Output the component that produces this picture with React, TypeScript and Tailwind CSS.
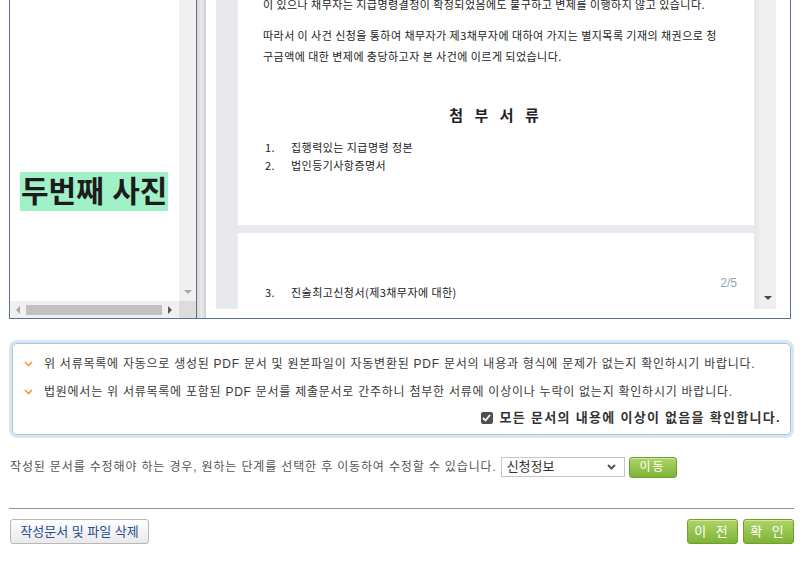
const KR = "font-['Liberation_Sans','Noto_Sans_CJK_KR',sans-serif]";

function Tri({ dir, color }: { dir: "down" | "left" | "right"; color: string }) {
  const pts =
    dir === "down" ? "0,0 8,0 4,4" : dir === "left" ? "4,0 4,8 0,4" : "0,0 0,8 4,4";
  const w = dir === "down" ? 8 : 4;
  const h = dir === "down" ? 4 : 8;
  return (
    <svg width={w} height={h} viewBox={`0 0 ${w} ${h}`}>
      <polygon points={pts} fill={color} />
    </svg>
  );
}

function Chevron() {
  return (
    <svg width="9" height="6" viewBox="0 0 9 6" className="shrink-0">
      <polyline points="1,1 4.5,4.5 8,1" fill="none" stroke="#f29a2e" strokeWidth="1.6" />
    </svg>
  );
}

function GreenButton({ label, className }: { label: string; className: string }) {
  return (
    <div
      className={`flex items-center justify-center rounded-[3px] border border-[#6f9f2c] bg-gradient-to-b from-[#acd565] to-[#7fb336] text-white shadow-[inset_0_1px_0_rgba(255,255,255,0.45)] ${className}`}
    >
      {label}
    </div>
  );
}

export default function App() {
  return (
    <div className={`w-[809px] h-[583px] bg-white overflow-hidden ${KR}`}>
      {/* document frame */}
      <div className="ml-[9px] w-[782px] h-[319px] border-x border-b border-[#5b7190] flex">
        {/* left preview panel */}
        <div className="w-[187px] border-r border-[#5b7190] flex flex-col">
          <div className="flex h-[301px]">
            <div className="w-[169px] bg-white pt-[172px] pl-[10px]">
              <span className="inline-block bg-[#a0f0c8] px-[1px] text-[30px] leading-[39px] font-bold text-[#1c1c1c]">
                두번째 사진
              </span>
            </div>
            <div className="w-[17px] bg-[#f0f0f0] flex flex-col justify-end items-center pb-[7px]">
              <Tri dir="down" color="#a6a6a6" />
            </div>
          </div>
          <div className="flex h-[17px]">
            <div className="w-[169px] bg-[#f0f0f0] flex items-center pl-[6px] pr-[7px] gap-[6px]">
              <Tri dir="left" color="#a8a8a8" />
              <div className="flex-1 h-[10px] bg-[#c1c1c1]" />
              <Tri dir="right" color="#5a5a5a" />
            </div>
            <div className="w-[17px] bg-[#dcdcdc]" />
          </div>
        </div>

        {/* splitter */}
        <div className="w-[9px] bg-gradient-to-r from-[#d6d6d6] via-[#ebebeb] to-[#cfcfcf]" />

        {/* viewer */}
        <div className="flex-1 bg-white pl-[10px] pr-[14px] pb-[9px]">
          <div className="h-full flex bg-[#e8e9ec] overflow-hidden">
            <div className="w-[543px] pl-[22px] pr-[5px] flex flex-col gap-[8px] text-[11px] tracking-[0.45px] text-[#222] font-['Noto_Sans_CJK_KR',sans-serif]">
              <div className="h-[225px] shrink-0 bg-white pl-[25px] overflow-hidden">
                <p className="-mt-[6px] leading-[21px]">
                  이 있으나 채무자는 지급명령결정이 확정되었음에도 불구하고 변제를 이행하지 않고 있습니다.
                </p>
                <p className="mt-[10px] leading-[21px]">
                  따라서 이 사건 신청을 통하여 채무자가 제3채무자에 대하여 가지는 별지목록 기재의 채권으로 청
                  <br />
                  구금액에 대한 변제에 충당하고자 본 사건에 이르게 되었습니다.
                </p>
                <p className="mt-[37px] pr-[25px] text-center text-[15px] leading-[21px] font-bold tracking-[4px]">
                  첨 부 서 류
                </p>
                <ol className="mt-[13px] leading-[18px]">
                  <li className="flex">
                    <span className="w-[28px] pl-[2px]">1.</span>집행력있는 지급명령 정본
                  </li>
                  <li className="flex">
                    <span className="w-[28px] pl-[2px]">2.</span>법인등기사항증명서
                  </li>
                </ol>
              </div>
              <div className="relative h-[120px] shrink-0 bg-white pl-[25px] pt-[50px]">
                <span className="absolute right-[17px] top-[41px] text-[12px] tracking-normal text-[#93a7bd] font-['Liberation_Sans',sans-serif]">
                  2/5
                </span>
                <div className="flex leading-[18px]">
                  <span className="w-[28px] pl-[2px]">3.</span>진술최고신청서(제3채무자에 대한)
                </div>
                <p className="mt-[4px] pr-[25px] text-center text-[#999] leading-[18px]">2023. 01. 00.</p>
              </div>
            </div>
            <div className="w-[17px] bg-[#f0f0f0] flex flex-col justify-end items-center pb-[9px]">
              <Tri dir="down" color="#4a4a4a" />
            </div>
          </div>
        </div>
      </div>

      {/* notice box */}
      <div className="ml-[12px] mt-[24px] w-[779px] h-[92px] rounded-[5px] border border-[#a8c5dc] shadow-[0_0_0_3px_#d8e6f1] pt-[12px] pl-[11px] pr-[9px] text-[12px] tracking-[0.75px] text-[#3a3a3a]">
        <div className="flex items-center gap-[11px] h-[16px]">
          <Chevron />
          <span>위 서류목록에 자동으로 생성된 PDF 문서 및 원본파일이 자동변환된 PDF 문서의 내용과 형식에 문제가 없는지 확인하시기 바랍니다.</span>
        </div>
        <div className="flex items-center gap-[11px] h-[16px] mt-[12px]">
          <Chevron />
          <span>법원에서는 위 서류목록에 포함된 PDF 문서를 제출문서로 간주하니 첨부한 서류에 이상이나 누락이 없는지 확인하시기 바랍니다.</span>
        </div>
        <div className="flex items-center justify-end gap-[7px] h-[16px] mt-[10px]">
          <div className="w-[12px] h-[12px] rounded-[2px] bg-[#505050] flex items-center justify-center">
            <svg width="9" height="8" viewBox="0 0 9 8">
              <polyline points="1,4 3.5,6.5 8,1" fill="none" stroke="#fff" strokeWidth="1.8" />
            </svg>
          </div>
          <span className="text-[13px] font-bold tracking-[1.3px] text-[#333]">모든 문서의 내용에 이상이 없음을 확인합니다.</span>
        </div>
      </div>

      {/* step move row */}
      <div className="ml-[10px] mt-[21px] h-[22px] flex items-center text-[12px] text-[#555]">
        <span className="tracking-[0.85px]">작성된 문서를 수정해야 하는 경우, 원하는 단계를 선택한 후 이동하여 수정할 수 있습니다.</span>
        <div className="ml-[4px] w-[124px] h-[20px] border border-[#c6c6c6] flex items-center justify-between pl-[5px] pr-[8px] text-[13px] text-[#333]">
          <span>신청정보</span>
          <svg width="9" height="6" viewBox="0 0 9 6">
            <polyline points="1,1 4.5,4.5 8,1" fill="none" stroke="#555" strokeWidth="2" />
          </svg>
        </div>
        <GreenButton label="이동" className="ml-[4px] w-[48px] h-[21px] text-[12px] tracking-[2px]" />
      </div>

      <div className="ml-[9px] mt-[30px] w-[785px] h-px bg-[#909090]" />

      {/* bottom buttons */}
      <div className="ml-[10px] mt-[10px] w-[784px] flex items-center justify-between">
        <div className="w-[139px] h-[25px] rounded-[3px] border border-[#b8b8b8] bg-gradient-to-b from-white to-[#e9e9e9] flex items-center justify-center text-[13px] text-[#1f4e97]">
          작성문서 및 파일 삭제
        </div>
        <div className="flex gap-[5px]">
          <GreenButton label="이 전" className="w-[51px] h-[25px] text-[13px] tracking-[3px]" />
          <GreenButton label="확 인" className="w-[51px] h-[25px] text-[13px] tracking-[3px]" />
        </div>
      </div>
    </div>
  );
}
